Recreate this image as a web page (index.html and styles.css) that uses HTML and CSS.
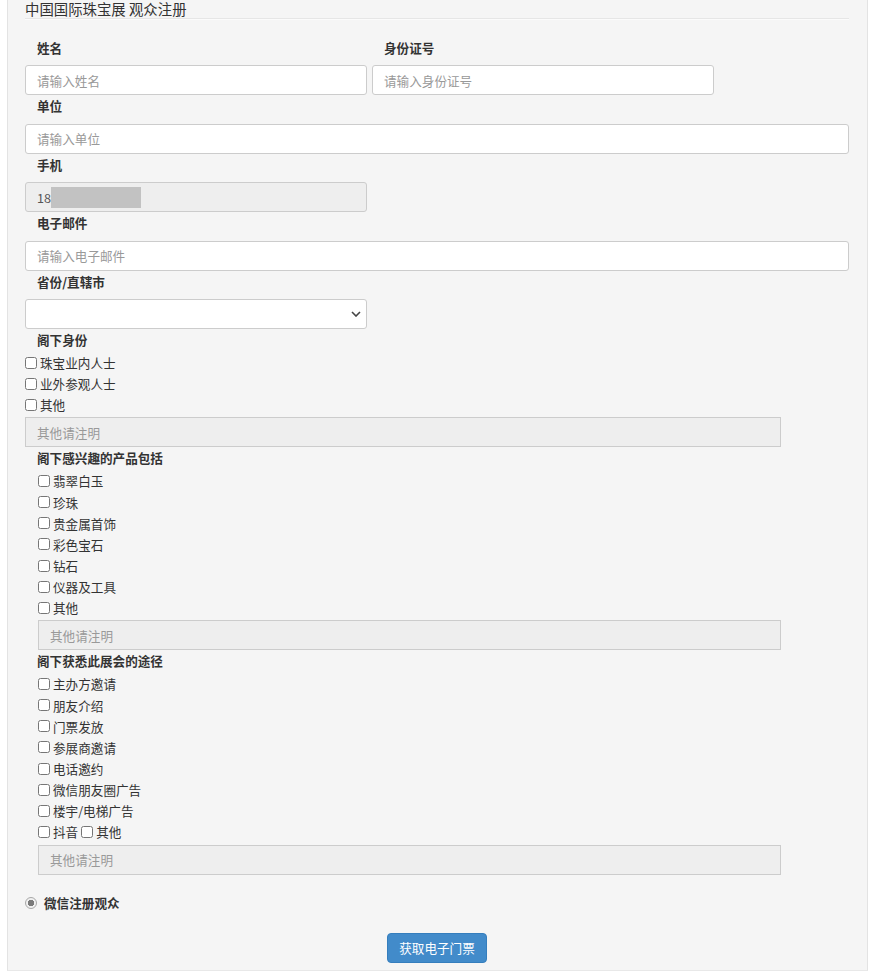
FILE: index.html
```html
<!DOCTYPE html>
<html>
<head>
    <meta charset="utf-8">
    <title>中国国际珠宝展 观众注册</title>
    <link rel="stylesheet" href="styles.css">
</head>
<body>
    <div class="panel">
        <div class="panel-title">中国国际珠宝展 观众注册</div>

        <div class="row-2">
            <div class="col">
                <label class="field-label">姓名</label>
                <input class="text-input" type="text" placeholder="请输入姓名">
            </div>
            <div class="col">
                <label class="field-label">身份证号</label>
                <input class="text-input" type="text" placeholder="请输入身份证号">
            </div>
        </div>

        <label class="field-label">单位</label>
        <input class="text-input" type="text" placeholder="请输入单位">

        <label class="field-label">手机</label>
        <div class="half masked">
            <input class="text-input" type="text" value="18" disabled>
            <span class="mask"></span>
        </div>

        <label class="field-label">电子邮件</label>
        <input class="text-input" type="text" placeholder="请输入电子邮件">

        <label class="field-label">省份/直辖市</label>
        <div class="half">
            <select class="select-input">
                <option></option>
            </select>
        </div>

        <label class="field-label tight">阁下身份</label>
        <div class="check-list">
            <label class="check"><input type="checkbox">珠宝业内人士</label>
            <label class="check"><input type="checkbox">业外参观人士</label>
            <label class="check"><input type="checkbox">其他</label>
        </div>
        <input class="text-input other" type="text" placeholder="其他请注明" disabled>

        <label class="field-label tight">阁下感兴趣的产品包括</label>
        <div class="check-list indent">
            <label class="check"><input type="checkbox">翡翠白玉</label>
            <label class="check"><input type="checkbox">珍珠</label>
            <label class="check"><input type="checkbox">贵金属首饰</label>
            <label class="check"><input type="checkbox">彩色宝石</label>
            <label class="check"><input type="checkbox">钻石</label>
            <label class="check"><input type="checkbox">仪器及工具</label>
            <label class="check"><input type="checkbox">其他</label>
        </div>
        <input class="text-input other indent-box" type="text" placeholder="其他请注明" disabled>

        <label class="field-label tight">阁下获悉此展会的途径</label>
        <div class="check-list indent">
            <label class="check"><input type="checkbox">主办方邀请</label>
            <label class="check"><input type="checkbox">朋友介绍</label>
            <label class="check"><input type="checkbox">门票发放</label>
            <label class="check"><input type="checkbox">参展商邀请</label>
            <label class="check"><input type="checkbox">电话邀约</label>
            <label class="check"><input type="checkbox">微信朋友圈广告</label>
            <label class="check"><input type="checkbox">楼宇/电梯广告</label>
            <div class="check">
                <label class="check-inline"><input type="checkbox">抖音</label>
                <label class="check-inline"><input type="checkbox">其他</label>
            </div>
        </div>
        <input class="text-input other indent-box" type="text" placeholder="其他请注明" disabled>

        <label class="radio-row"><input type="radio" checked disabled>微信注册观众</label>

        <div class="actions">
            <button class="submit-button">获取电子门票</button>
        </div>
    </div>
</body>
</html>
```

FILE: styles.css
```css
body {
    margin: 0;
    padding: 0;
    background-color: white;
    color: #333;
    font-family: "Noto Sans CJK SC", "Liberation Sans", sans-serif;
    font-size: 12.6px;
}

.panel {
    width: 824px;
    margin-left: 7px;
    padding: 1px 18px 7px 17px;
    background-color: #f5f5f5;
    border-left: 1px solid #e3e3e3;
    border-right: 1px solid #e3e3e3;
    border-bottom: 1px solid #e8e8e8;
}

.panel-title {
    font-size: 14.4px;
    line-height: 16px;
    padding-bottom: 1px;
    border-bottom: 1px solid #e6e6e6;
    box-shadow: 0 1px 0 #fbfbfb;
    margin-bottom: 17.5px;
}

.row-2 {
    display: flex;
    gap: 5px;
}

    .row-2 .col {
        width: 342px;
    }

.half {
    width: 342px;
}

.field-label {
    display: block;
    font-weight: bold;
    line-height: 20px;
    padding-left: 12px;
    margin: 1px 0 7.5px;
}

    .field-label.tight {
        margin-bottom: 2px;
    }

.text-input,
.select-input {
    display: block;
    width: 100%;
    height: 30px;
    box-sizing: border-box;
    padding: 0 11px;
    border: 1px solid #ccc;
    border-radius: 3px;
    background-color: white;
    color: #555;
    font-family: inherit;
    font-size: 12.6px;
    outline: none;
}

    .text-input::placeholder {
        color: #999;
    }

    .text-input:disabled {
        background-color: #eee;
        color: #555;
    }

.select-input {
    appearance: none;
    -webkit-appearance: none;
    background-image: url("data:image/svg+xml,%3Csvg xmlns='http://www.w3.org/2000/svg' width='10' height='6' viewBox='0 0 10 6'%3E%3Cpath d='M1 1l4 4 4-4' fill='none' stroke='%23444' stroke-width='1.6'/%3E%3C/svg%3E");
    background-repeat: no-repeat;
    background-position: right 5px center;
}

.masked {
    position: relative;
}

.mask {
    position: absolute;
    left: 26px;
    top: 5px;
    width: 90px;
    height: 21px;
    background-color: #c2c2c2;
}

.check-list {
    display: flex;
    flex-direction: column;
}

    .check-list.indent {
        padding-left: 13px;
    }

.check {
    display: flex;
    align-items: center;
    height: 21.15px;
    line-height: 21px;
}

    .check input,
    .check-inline input {
        width: 12px;
        height: 12px;
        margin: 0 3px 0 0;
    }

.check-inline {
    display: inline-flex;
    align-items: center;
    margin-right: 3px;
}

.other {
    width: 756px;
    margin-top: 2px;
    border-radius: 0;
}

.indent-box {
    width: 743px;
    margin-left: 13px;
}

.radio-row {
    display: flex;
    align-items: center;
    height: 20px;
    margin-top: 18px;
    font-weight: bold;
}

    .radio-row input {
        appearance: none;
        -webkit-appearance: none;
        width: 12px;
        height: 12px;
        margin: 0 7px 0 0;
        border: 1px solid #a8a8a8;
        border-radius: 50%;
        background: radial-gradient(circle, #7a7a7a 0 3px, #f0f0f0 3.5px);
    }

.actions {
    display: flex;
    justify-content: center;
    margin-top: 20px;
}

.submit-button {
    height: 30px;
    padding: 0 11px;
    background-color: #428bca;
    border: 1px solid #357ebd;
    border-radius: 4px;
    color: white;
    font-family: inherit;
    font-size: 12.6px;
    cursor: pointer;
}
```
